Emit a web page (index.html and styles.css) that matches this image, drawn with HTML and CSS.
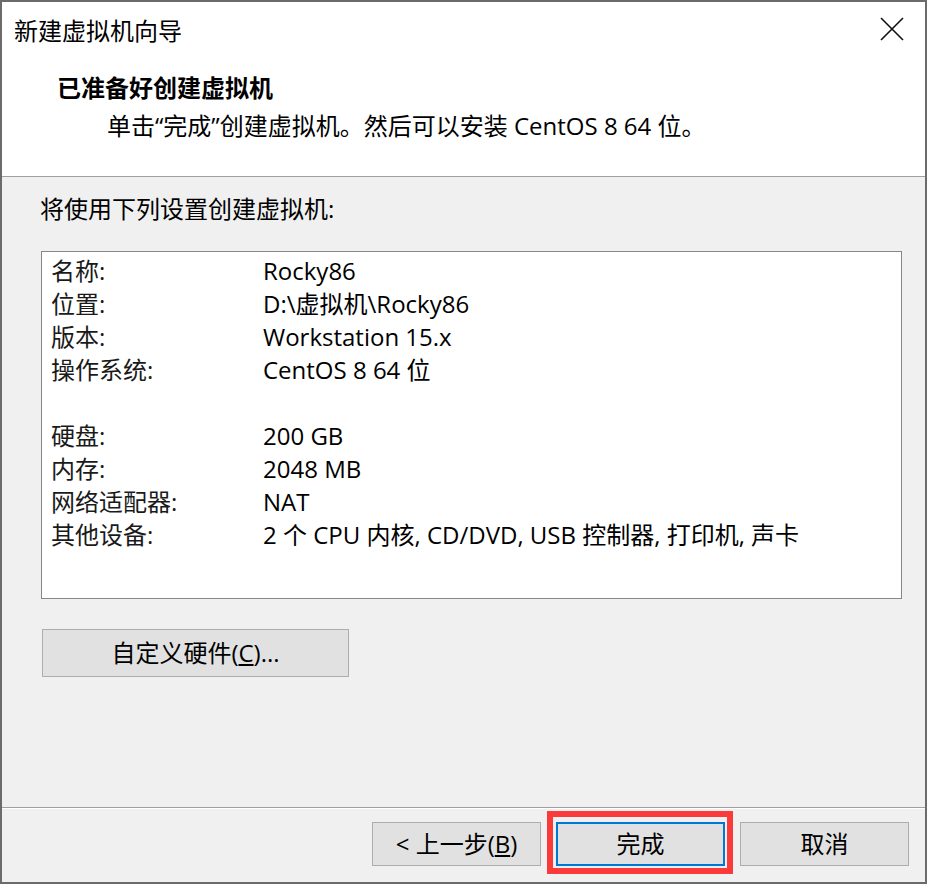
FILE: index.html
```html
<!DOCTYPE html>
<html lang="zh-CN">
<head>
<meta charset="utf-8">
<title>新建虚拟机向导</title>
<link rel="stylesheet" href="styles.css">
</head>
<body>
<div class="window">
  <div class="header">
    <div class="titlebar">
      <span class="title">新建虚拟机向导</span>
      <span class="close">
        <svg width="24" height="24" viewBox="0 0 24 24"><path d="M1 1 L23 23 M23 1 L1 23" stroke="#111" stroke-width="1.6" fill="none"/></svg>
      </span>
    </div>
    <div class="heading">已准备好创建虚拟机</div>
    <div class="subtitle">单击“完成”创建虚拟机。然后可以安装 CentOS 8 64 位。</div>
  </div>
  <div class="content">
    <div class="intro">将使用下列设置创建虚拟机:</div>
    <div class="listbox">
      <div class="row"><span class="k">名称:</span><span class="v">Rocky86</span></div>
      <div class="row"><span class="k">位置:</span><span class="v">D:\虚拟机\Rocky86</span></div>
      <div class="row"><span class="k">版本:</span><span class="v">Workstation 15.x</span></div>
      <div class="row"><span class="k">操作系统:</span><span class="v">CentOS 8 64 位</span></div>
      <div class="row"></div>
      <div class="row"><span class="k">硬盘:</span><span class="v">200 GB</span></div>
      <div class="row"><span class="k">内存:</span><span class="v">2048 MB</span></div>
      <div class="row"><span class="k">网络适配器:</span><span class="v">NAT</span></div>
      <div class="row"><span class="k">其他设备:</span><span class="v">2 个 CPU 内核, CD/DVD, USB 控制器, 打印机, 声卡</span></div>
    </div>
    <button class="btn custom">自定义硬件(<u>C</u>)...</button>
  </div>
  <div class="footer">
    <button class="btn">&lt; 上一步(<u>B</u>)</button>
    <div class="finish-wrap">
      <button class="btn primary">完成</button>
      <span class="highlight"></span>
    </div>
    <button class="btn">取消</button>
  </div>
</div>
</body>
</html>
```
FILE: styles.css
```css
html, body {
  margin: 0;
  padding: 0;
}
body {
  width: 927px;
  height: 884px;
  font-family: "Open Sans", "Noto Sans CJK SC", sans-serif;
  font-size: 24px;
  color: #000;
}
.window {
  box-sizing: border-box;
  width: 927px;
  height: 884px;
  border: 2px solid #6b6b6b;
  background: #f0f0f0;
  display: flex;
  flex-direction: column;
}
.header {
  box-sizing: border-box;
  height: 175px;
  background: #fff;
  border-bottom: 1px solid #a0a0a0;
}
.titlebar {
  height: 58px;
  display: flex;
  align-items: center;
  justify-content: space-between;
  padding-left: 12px;
  padding-right: 21px;
}
.title {
  line-height: 58px;
}
.close {
  display: flex;
  margin-top: -4px;
}
.heading {
  margin-top: 11px;
  margin-left: 55px;
  line-height: 34px;
  font-weight: 700;
}
.subtitle {
  margin-top: 4px;
  margin-left: 105px;
  line-height: 34px;
}
.content {
  box-sizing: border-box;
  height: 630px;
  padding: 15px 0 0 38px;
}
.intro {
  line-height: 34px;
}
.listbox {
  box-sizing: border-box;
  margin-top: 25px;
  margin-left: 1px;
  width: 861px;
  height: 348px;
  border: 1px solid #828790;
  background: #fff;
  padding: 2px 0 0 9px;
}
.row {
  display: flex;
  height: 33px;
  line-height: 33px;
}
.k {
  width: 212px;
  color: #1a1a1a;
}
.v {
  white-space: nowrap;
}
.btn {
  box-sizing: border-box;
  font: inherit;
  color: #000;
  background: #e1e1e1;
  border: 1px solid #adadad;
  padding: 0;
  margin: 0;
  line-height: 1;
}
.custom {
  display: block;
  margin-top: 30px;
  margin-left: 2px;
  width: 307px;
  height: 48px;
}
.footer {
  flex: 1;
  border-top: 1px solid #a0a0a0;
  box-shadow: inset 0 1px 0 #ffffff;
  display: flex;
  justify-content: flex-end;
  align-items: flex-start;
  gap: 15px;
  padding: 14px 16px 0 0;
}
.footer .btn {
  width: 169px;
  height: 44px;
}
.finish-wrap {
  position: relative;
  display: flex;
}
.btn.primary {
  border: 2px solid #0078d7;
}
.highlight {
  position: absolute;
  left: -9px;
  right: -8px;
  top: -11px;
  bottom: -8px;
  border: 6px solid #fb3b3b;
  pointer-events: none;
}
```
